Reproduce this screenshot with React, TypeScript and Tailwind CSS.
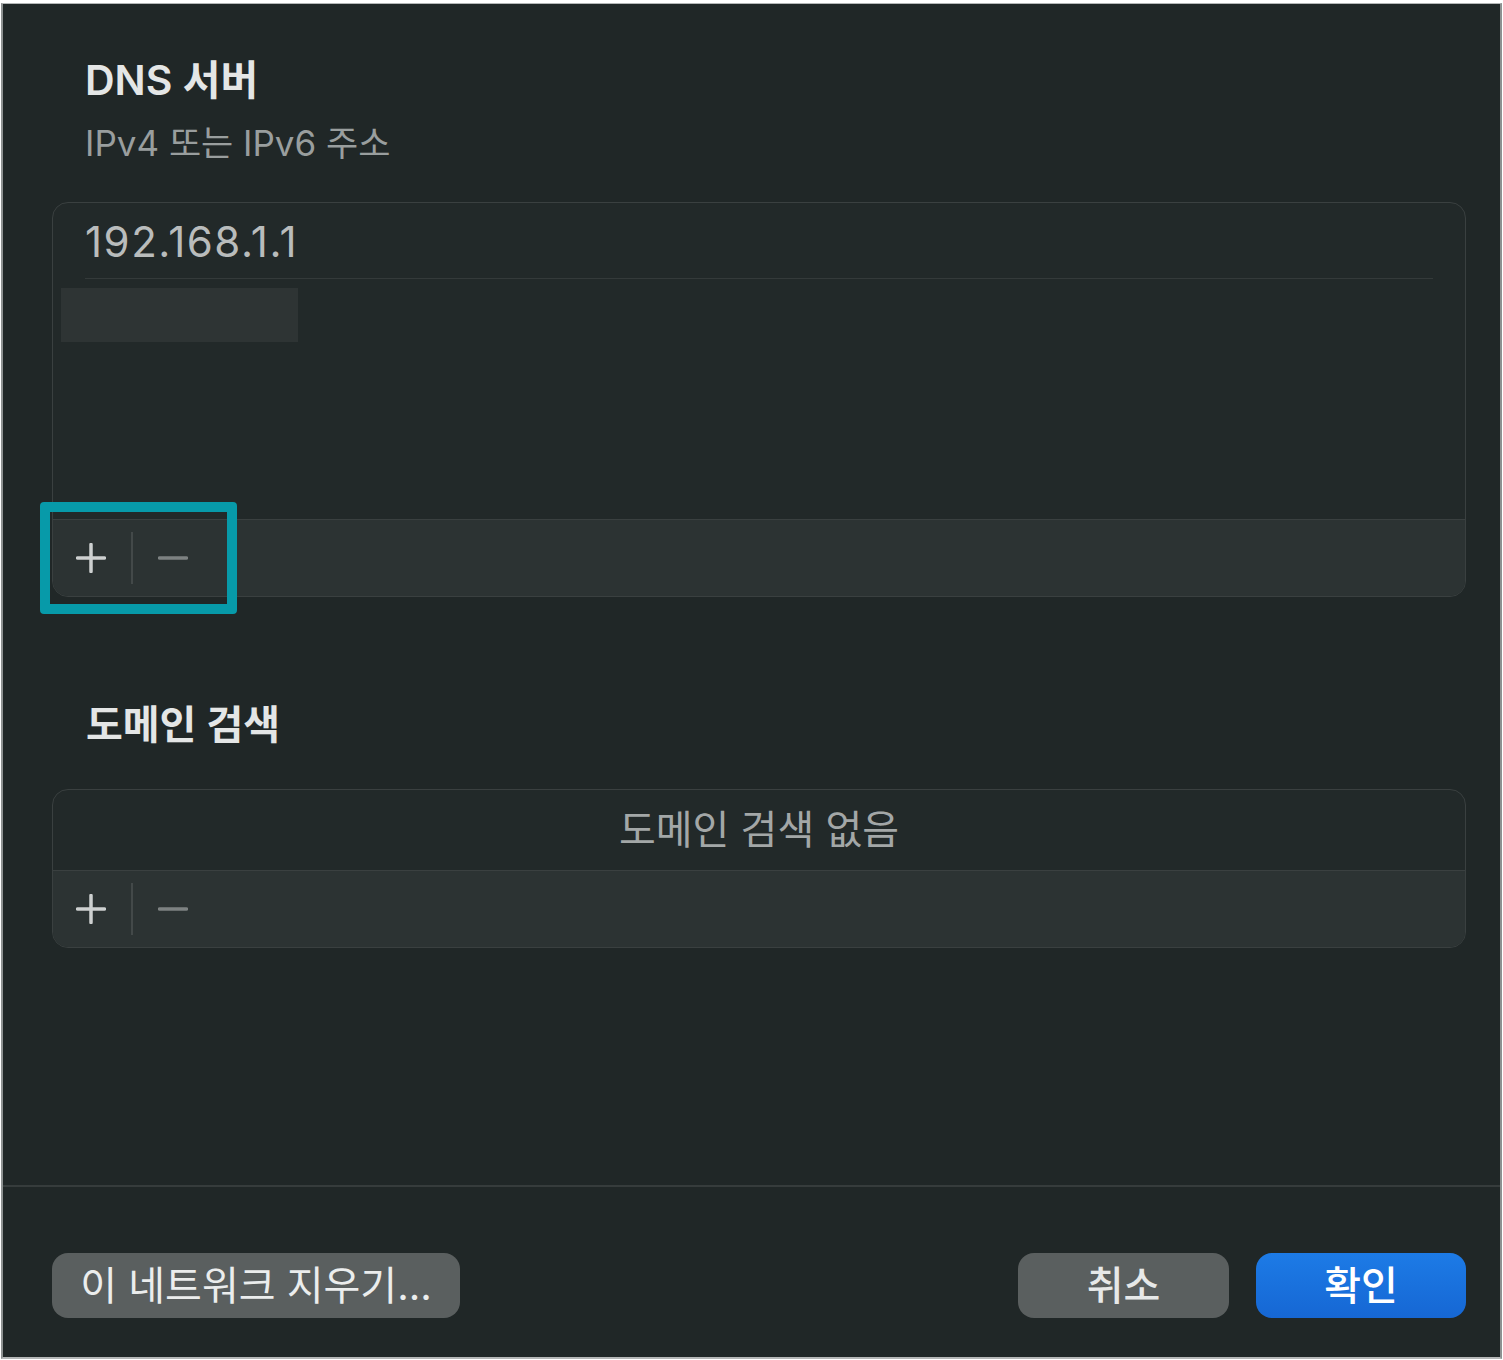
import React from "react";

function PlusIcon({ color = "#cdd0d0" }: { color?: string }) {
  return (
    <svg width="30" height="30" viewBox="0 0 30 30" fill="none">
      <path d="M15 1.5v27M1.5 15h27" stroke={color} strokeWidth="3.5" strokeLinecap="round" />
    </svg>
  );
}

function MinusIcon({ color = "#7d8282" }: { color?: string }) {
  return (
    <svg width="30" height="30" viewBox="0 0 30 30" fill="none">
      <path d="M1.5 15h27" stroke={color} strokeWidth="3.5" strokeLinecap="round" />
    </svg>
  );
}

function ListFooter() {
  return (
    <div className="flex h-[77px] items-center border-t border-[#3a4040] bg-[#2c3333] pl-[23px]">
      <PlusIcon />
      <div className="ml-[25px] h-[52px] w-[2px] bg-[#434949]" />
      <div className="ml-[25px]">
        <MinusIcon />
      </div>
    </div>
  );
}

export default function App() {
  return (
    <div className="min-h-screen bg-white pl-[1px] pt-[3px] font-['Inter','Noto_Sans_CJK_KR',sans-serif]">
      <div className="flex h-[1356px] w-[1501px] flex-col border-l-2 border-t border-r-2 border-b-2 border-l-[#8d9191] border-t-[#b4b7b7] border-r-[#8d9191] border-b-[#b4b7b7] bg-[#202727]">
        <div className="flex-1 pl-[49px] pr-[34px]">
          <div className="pl-[33px] pt-[52px]">
            <h1 className="text-[41px] font-semibold leading-[48px] text-[#e4e6e6]">DNS 서버</h1>
            <p className="mt-[19px] text-[35px] leading-[40px] text-[#999e9e]">IPv4 또는 IPv6 주소</p>
          </div>

          <div className="relative mt-[39px] overflow-visible">
            <div className="overflow-hidden rounded-[16px] border border-[#3a4040] bg-[#222929]">
              <div className="mx-[32px] h-[76px] border-b border-[#343a3a] pt-[15px]">
                <span className="text-[42px] leading-[48px] tracking-[1.5px] text-[#b9bcbc]">192.168.1.1</span>
              </div>
              <div className="ml-[8px] mt-[9px] h-[54px] w-[237px] bg-[#2e3434]" />
              <div className="h-[177px]" />
              <ListFooter />
            </div>
            <div className="absolute left-[-12px] top-[300px] h-[112px] w-[197px] rounded-[4px] border-[10px] border-[#079aa9]" />
          </div>

          <h2 className="mt-[104px] pl-[34px] text-[40px] font-semibold leading-[48px] text-[#e4e6e6]">도메인 검색</h2>

          <div className="mt-[40px] overflow-hidden rounded-[16px] border border-[#3a4040] bg-[#222929]">
            <div className="flex h-[80px] items-center justify-center">
              <span className="text-[40px] leading-[48px] text-[#a3a7a7]">도메인 검색 없음</span>
            </div>
            <ListFooter />
          </div>
        </div>

        <div className="h-[2px] bg-[#363c3c]" />

        <div className="flex h-[170px] items-start justify-between pl-[49px] pr-[34px] pt-[66px]">
          <button className="flex h-[65px] w-[408px] items-center justify-center rounded-[16px] bg-[#5a5f5f] text-[40px] leading-none text-[#ebeded]">
            이 네트워크 지우기...
          </button>
          <div className="flex gap-[27px]">
            <button className="flex h-[65px] w-[211px] items-center justify-center rounded-[16px] bg-[#5a5f5f] text-[40px] font-medium leading-none text-[#e6e8e8]">
              취소
            </button>
            <button className="flex h-[65px] w-[210px] items-center justify-center rounded-[16px] bg-gradient-to-b from-[#1d7be6] to-[#1667d4] text-[40px] font-medium leading-none text-white">
              확인
            </button>
          </div>
        </div>
      </div>
    </div>
  );
}
